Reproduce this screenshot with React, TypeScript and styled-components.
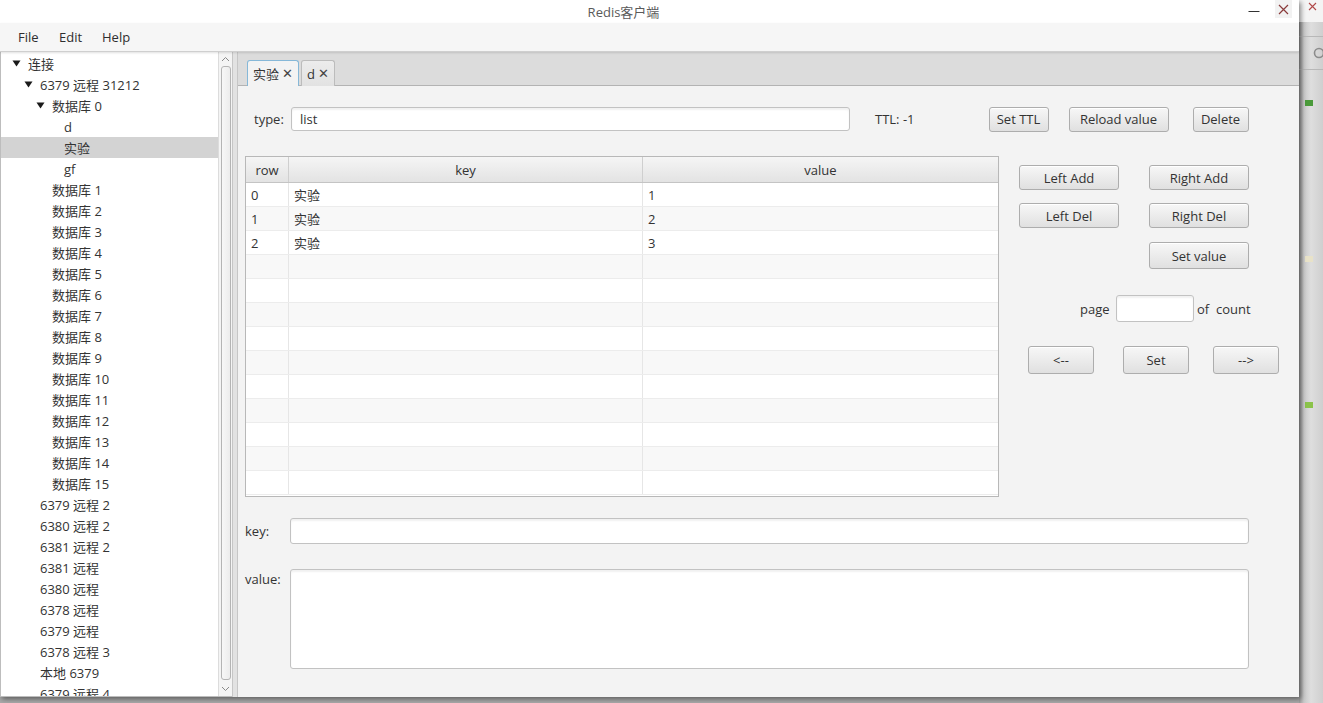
import * as React from "react";
import styled, { createGlobalStyle } from "styled-components";

const GlobalStyle = createGlobalStyle`
  html, body {
    margin: 0;
    padding: 0;
    overflow: hidden;
    background: #a9a9a9;
  }
  * {
    box-sizing: border-box;
  }
`;

const FONT = `"Open Sans", "Noto Sans CJK SC", "Noto Sans", sans-serif`;

interface TreeNode {
  label: string;
  level: number;
  expanded?: boolean;
  selected?: boolean;
}

const treeNodes: TreeNode[] = [
  { label: "连接", level: 0, expanded: true },
  { label: "6379 远程 31212", level: 1, expanded: true },
  { label: "数据库 0", level: 2, expanded: true },
  { label: "d", level: 3 },
  { label: "实验", level: 3, selected: true },
  { label: "gf", level: 3 },
  ...Array.from({ length: 15 }, (_, i) => ({ label: "数据库 " + (i + 1), level: 2 })),
  { label: "6379 远程 2", level: 1 },
  { label: "6380 远程 2", level: 1 },
  { label: "6381 远程 2", level: 1 },
  { label: "6381 远程", level: 1 },
  { label: "6380 远程", level: 1 },
  { label: "6378 远程", level: 1 },
  { label: "6379 远程", level: 1 },
  { label: "6378 远程 3", level: 1 },
  { label: "本地 6379", level: 1 },
  { label: "6379 远程 4", level: 1 },
];

const listRows = [
  { row: "0", key: "实验", value: "1" },
  { row: "1", key: "实验", value: "2" },
  { row: "2", key: "实验", value: "3" },
];

const Screen = styled.div`
  width: 1323px;
  height: 703px;
  display: flex;
  overflow: hidden;
  font-family: ${FONT};
  font-size: 13px;
  color: #333;
  background: #a9a9a9;
`;

const Window = styled.div`
  width: 1299px;
  height: 697px;
  display: flex;
  flex-direction: column;
  background: #f3f3f3;
  box-shadow: 2px 2px 5px rgba(0, 0, 0, 0.45);
  position: relative;
  z-index: 2;
  flex-shrink: 0;
`;

const TitleBar = styled.div`
  height: 23px;
  background: #ffffff;
  display: flex;
  align-items: center;
`;

const Title = styled.div`
  flex: 1;
  text-align: center;
  color: #5a5a5a;
  font-size: 13px;
  padding-left: 2px;
  line-height: 20px;
`;

const WinButton = styled.div<{ $close?: boolean }>`
  width: 17px;
  height: 18px;
  margin-right: ${(p) => (p.$close ? "7px" : "13px")};
  align-self: flex-start;
  display: flex;
  align-items: center;
  justify-content: center;
  background: ${(p) => (p.$close ? "#f2f2f2" : "transparent")};
`;

const MenuBar = styled.div`
  height: 29px;
  background: #f6f6f6;
  display: flex;
  align-items: center;
  padding-left: 18px;
  border-bottom: 1px solid #cfcfcf;
  box-shadow: 0 1px 2px rgba(0, 0, 0, 0.12);
  position: relative;
  z-index: 1;
`;

const MenuItem = styled.span<{ $w: number }>`
  width: ${(p) => p.$w}px;
  color: #2e2e2e;
  font-size: 13px;
`;

const Body = styled.div`
  flex: 1;
  display: flex;
  min-height: 0;
`;

const Sidebar = styled.div`
  width: 232px;
  display: flex;
  background: #ffffff;
  border-left: 1px solid #bdbdbd;
  border-bottom: 1px solid #bdbdbd;
`;

const Tree = styled.div`
  flex: 1;
  padding-top: 1px;
  overflow: hidden;
`;

const TreeRow = styled.div<{ $level: number; $selected?: boolean }>`
  height: 21px;
  display: flex;
  align-items: center;
  padding-left: ${(p) => 11 + p.$level * 12}px;
  background: ${(p) => (p.$selected ? "#d3d3d3" : "transparent")};
  color: #333;
  white-space: nowrap;
`;

const Arrow = styled.span`
  width: 16px;
  display: inline-flex;
  align-items: center;
`;

const ScrollTrack = styled.div`
  width: 14px;
  background: #f4f4f4;
  border-left: 1px solid #dcdcdc;
  display: flex;
  flex-direction: column;
  align-items: center;
  padding: 2px 1px;
`;

const ScrollArrow = styled.div`
  height: 10px;
  display: flex;
  align-items: center;
  justify-content: center;
`;

const ScrollThumb = styled.div`
  width: 10px;
  flex: 1;
  margin: 2px 0 4px;
  border: 1px solid #b4b4b4;
  border-radius: 3px;
  background: linear-gradient(to right, #f7f7f7, #ececec);
`;

const Splitter = styled.div`
  width: 6px;
  background: #e2e2e2;
  border-left: 1px solid #c6c6c6;
  border-right: 1px solid #c6c6c6;
`;

const Main = styled.div`
  flex: 1;
  display: flex;
  flex-direction: column;
  background: #f3f3f3;
`;

const TabHeader = styled.div`
  height: 34px;
  background: #dcdcdc;
  border-bottom: 1px solid #b3b3b3;
  display: flex;
  align-items: flex-end;
  padding-left: 9px;
  gap: 2px;
`;

const Tab = styled.div<{ $active?: boolean }>`
  height: 26px;
  padding: 0 5px 0 5px;
  display: flex;
  align-items: center;
  gap: 3px;
  border: 1px solid ${(p) => (p.$active ? "#86b8d8" : "#bcbcbc")};
  border-bottom: none;
  border-radius: 3px 3px 0 0;
  background: ${(p) => (p.$active ? "#f3f3f3" : "linear-gradient(#ececec, #e2e2e2)")};
  color: #333;
  margin-bottom: -1px;
`;

const TabClose = styled.span`
  font-family: "DejaVu Sans", sans-serif;
  font-size: 13px;
  color: #444;
`;

const Content = styled.div`
  flex: 1;
  display: flex;
  flex-direction: column;
  padding: 21px 0 0 7px;
`;

const TopRow = styled.div`
  height: 24px;
  display: flex;
  align-items: center;
  padding-left: 9px;
`;

const Label = styled.span<{ $w?: number; $ml?: number }>`
  width: ${(p) => (p.$w ? p.$w + "px" : "auto")};
  margin-left: ${(p) => p.$ml || 0}px;
  flex-shrink: 0;
  color: #333;
`;

const TextInput = styled.div<{ $w: number; $h?: number }>`
  width: ${(p) => p.$w}px;
  height: ${(p) => p.$h || 24}px;
  background: #fff;
  border: 1px solid #c2c2c2;
  border-radius: 3px;
  box-shadow: inset 0 2px 2px rgba(0, 0, 0, 0.06);
  padding: 0 8px;
  display: flex;
  align-items: center;
  flex-shrink: 0;
  color: #333;
`;

const Button = styled.div<{ $w: number; $h?: number; $ml?: number }>`
  width: ${(p) => p.$w}px;
  height: ${(p) => p.$h || 25}px;
  margin-left: ${(p) => p.$ml || 0}px;
  flex-shrink: 0;
  border: 1px solid #adadad;
  border-radius: 3px;
  background: linear-gradient(#f7f7f7, #e0e0e0);
  box-shadow: inset 0 1px 0 #fff;
  display: flex;
  align-items: center;
  justify-content: center;
  color: #333;
`;

const Middle = styled.div`
  display: flex;
  margin-top: 25px;
`;

const Table = styled.div`
  width: 754px;
  height: 341px;
  border: 1px solid #b8b8b8;
  background: #fff;
  overflow: hidden;
  flex-shrink: 0;
`;

const TableRow = styled.div<{ $alt?: boolean; $header?: boolean }>`
  display: grid;
  grid-template-columns: 43px 354px 1fr;
  height: ${(p) => (p.$header ? 26 : 24)}px;
  background: ${(p) =>
    p.$header ? "linear-gradient(#f5f5f5, #e3e3e3)" : p.$alt ? "#f8f8f8" : "#ffffff"};
  border-bottom: 1px solid ${(p) => (p.$header ? "#c4c4c4" : "#ececec")};
`;

const Cell = styled.div<{ $header?: boolean }>`
  display: flex;
  align-items: center;
  justify-content: ${(p) => (p.$header ? "center" : "flex-start")};
  padding-left: ${(p) => (p.$header ? 0 : 5)}px;
  border-right: 1px solid ${(p) => (p.$header ? "#cfcfcf" : "#e6e6e6")};
  color: #333;
  &:last-child {
    border-right: none;
  }
`;

const Controls = styled.div`
  display: flex;
  flex-direction: column;
  padding: 9px 0 0 20px;
`;

const ControlRow = styled.div<{ $mt: number; $pl?: number }>`
  display: flex;
  align-items: center;
  margin-top: ${(p) => p.$mt}px;
  padding-left: ${(p) => p.$pl || 0}px;
`;

const FormRow = styled.div<{ $mt: number; $top?: boolean }>`
  display: flex;
  align-items: ${(p) => (p.$top ? "flex-start" : "center")};
  margin-top: ${(p) => p.$mt}px;
`;

const FormLabel = styled.span<{ $top?: boolean }>`
  width: 45px;
  flex-shrink: 0;
  padding-top: ${(p) => (p.$top ? 1 : 0)}px;
`;

const BackApp = styled.div`
  flex: 1;
  height: 703px;
  display: flex;
  flex-direction: column;
  background: linear-gradient(to right, #9b9b9b 0, #c9c9c9 5px, #dedede 12px, #cfcfcf 24px);
`;

const BackTop = styled.div`
  height: 22px;
  background: #f4f4f4;
  display: flex;
  padding: 2px 0 0 9px;
`;

const BackBar = styled.div`
  height: 34px;
  margin-top: 14px;
  border-top: 1px solid #b8b8b8;
  border-bottom: 1px solid #b8b8b8;
  display: flex;
  align-items: center;
  padding-left: 14px;
`;

const BackMark = styled.div<{ $mt: number; $c: string }>`
  margin-top: ${(p) => p.$mt}px;
  height: 6px;
  margin-left: 6px;
  width: 8px;
  background: ${(p) => p.$c};
`;

const TriangleDown = () => (
  <svg width="9" height="7" viewBox="0 0 9 7">
    <path d="M0.5 0.5 H8.5 L4.5 6.5 Z" fill="#1a1a1a" />
  </svg>
);

const Chevron = ({ up }: { up?: boolean }) => (
  <svg width="9" height="6" viewBox="0 0 9 6">
    <path d={up ? "M1 5 L4.5 1.5 L8 5" : "M1 1 L4.5 4.5 L8 1"} fill="none" stroke="#8a8a8a" strokeWidth="1" />
  </svg>
);

const App: React.FC = () => {
  const emptyRows = Array.from({ length: 10 }, (_, i) => i + 3);

  return (
    <Screen>
      <GlobalStyle />
      <Window>
        <TitleBar>
          <Title>Redis客户端</Title>
          <WinButton>
            <svg width="12" height="12" viewBox="0 0 12 12">
              <path d="M0.5 8.5 H11.5" stroke="#333" strokeWidth="1" />
            </svg>
          </WinButton>
          <WinButton $close>
            <svg width="11" height="11" viewBox="0 0 11 11">
              <path d="M1 1 L10 10 M10 1 L1 10" stroke="#8a3b3b" strokeWidth="1.2" />
            </svg>
          </WinButton>
        </TitleBar>

        <MenuBar>
          <MenuItem $w={41}>File</MenuItem>
          <MenuItem $w={43}>Edit</MenuItem>
          <MenuItem $w={40}>Help</MenuItem>
        </MenuBar>

        <Body>
          <Sidebar>
            <Tree>
              {treeNodes.map((n, i) => (
                <TreeRow key={i} $level={n.level} $selected={n.selected}>
                  <Arrow>{n.expanded ? <TriangleDown /> : null}</Arrow>
                  {n.label}
                </TreeRow>
              ))}
            </Tree>
            <ScrollTrack>
              <ScrollArrow>
                <Chevron up />
              </ScrollArrow>
              <ScrollThumb />
              <ScrollArrow>
                <Chevron />
              </ScrollArrow>
            </ScrollTrack>
          </Sidebar>
          <Splitter />

          <Main>
            <TabHeader>
              <Tab $active>
                实验 <TabClose>✕</TabClose>
              </Tab>
              <Tab>
                d <TabClose>✕</TabClose>
              </Tab>
            </TabHeader>

            <Content>
              <TopRow>
                <Label $w={37}>type:</Label>
                <TextInput $w={559}>list</TextInput>
                <Label $ml={25}>TTL: -1</Label>
                <Button $w={60} $ml={74}>Set TTL</Button>
                <Button $w={100} $ml={20}>Reload value</Button>
                <Button $w={56} $ml={24}>Delete</Button>
              </TopRow>

              <Middle>
                <Table>
                  <TableRow $header>
                    <Cell $header>row</Cell>
                    <Cell $header>key</Cell>
                    <Cell $header>value</Cell>
                  </TableRow>
                  {listRows.map((r, i) => (
                    <TableRow key={r.row} $alt={i % 2 === 1}>
                      <Cell>{r.row}</Cell>
                      <Cell>{r.key}</Cell>
                      <Cell>{r.value}</Cell>
                    </TableRow>
                  ))}
                  {emptyRows.map((i) => (
                    <TableRow key={i} $alt={i % 2 === 1}>
                      <Cell />
                      <Cell />
                      <Cell />
                    </TableRow>
                  ))}
                </Table>

                <Controls>
                  <ControlRow $mt={0}>
                    <Button $w={100}>Left Add</Button>
                    <Button $w={100} $ml={30}>Right Add</Button>
                  </ControlRow>
                  <ControlRow $mt={13}>
                    <Button $w={100}>Left Del</Button>
                    <Button $w={100} $ml={30}>Right Del</Button>
                  </ControlRow>
                  <ControlRow $mt={14}>
                    <Button $w={100} $h={27} $ml={130}>Set value</Button>
                  </ControlRow>
                  <ControlRow $mt={26} $pl={61}>
                    <Label $w={36}>page</Label>
                    <TextInput $w={78} $h={27} />
                    <Label $ml={3}>of&nbsp; count</Label>
                  </ControlRow>
                  <ControlRow $mt={24} $pl={9}>
                    <Button $w={66} $h={28}>&lt;--</Button>
                    <Button $w={66} $h={28} $ml={29}>Set</Button>
                    <Button $w={66} $h={28} $ml={24}>--&gt;</Button>
                  </ControlRow>
                </Controls>
              </Middle>

              <FormRow $mt={21}>
                <FormLabel>key:</FormLabel>
                <TextInput $w={959} $h={26} />
              </FormRow>
              <FormRow $mt={25} $top>
                <FormLabel $top>value:</FormLabel>
                <TextInput $w={959} $h={100} />
              </FormRow>
            </Content>
          </Main>
        </Body>
      </Window>

      <BackApp>
        <BackTop>
          <svg width="9" height="9" viewBox="0 0 9 9">
            <path d="M1 1 L8 8 M8 1 L1 8" stroke="#b04848" strokeWidth="1.1" />
          </svg>
        </BackTop>
        <BackBar>
          <svg width="12" height="12" viewBox="0 0 12 12">
            <circle cx="6" cy="6" r="4.5" fill="none" stroke="#8c8c8c" strokeWidth="1.6" />
          </svg>
        </BackBar>
        <BackMark $mt={30} $c="#4a9a3a" />
        <BackMark $mt={150} $c="#e8e2c8" />
        <BackMark $mt={140} $c="#8bc34a" />
      </BackApp>
    </Screen>
  );
};

export default App;
